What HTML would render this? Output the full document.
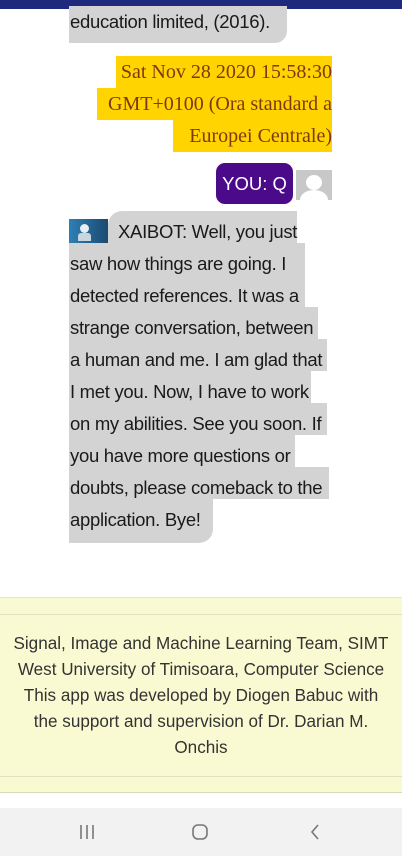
<!DOCTYPE html>
<html><head><meta charset="utf-8"><style>
*{margin:0;padding:0;box-sizing:border-box}
body{width:402px;height:856px;position:relative;background:#fff;overflow:hidden;font-family:"Liberation Sans",sans-serif}
.a{position:absolute;white-space:nowrap}
.g{background:#d3d3d3;color:#1a1a1a;font-size:18.5px;line-height:32px;height:32px;padding-left:1px;letter-spacing:-0.3px}
.b{line-height:42px;overflow:visible}
.y{background:#ffd400;color:#7a3a10;font-family:"Liberation Serif",serif;font-size:20px;line-height:32px;height:32px;text-align:right;padding-right:0}
.f{color:#333;font-size:17.1px;line-height:26px;text-align:center;width:402px;left:0}
</style></head><body>
<div class="a" style="left:0;top:0;width:402px;height:9px;background:#1f2a7e"></div>
<div class="a g" style="left:69px;top:6px;width:218px;height:37px;line-height:32px;border-bottom-right-radius:12px">education limited, (2016).</div>
<div class="a y" style="left:116px;top:56px;width:216px">Sat Nov 28 2020 15:58:30</div>
<div class="a y" style="left:97px;top:88px;width:235px">GMT+0100 (Ora standard a</div>
<div class="a y" style="left:173px;top:120px;width:159px">Europei Centrale)</div>
<div class="a" style="left:216px;top:163px;width:77px;height:41px;background:#4b0a8a;border-radius:9px;color:#fff;font-size:18.5px;line-height:41px;text-align:center">YOU: Q</div>
<div class="a" style="left:296px;top:170px;width:36px;height:30px;background:#c8c8c8;overflow:hidden">
<div style="position:absolute;left:10px;top:5px;width:16px;height:15px;border-radius:50%;background:#fff"></div>
<div style="position:absolute;left:4px;top:20px;width:28px;height:20px;border-radius:50%;background:#fff"></div></div>
<div class="a g b" style="left:108px;top:211px;width:189px;border-top-left-radius:14px;padding-left:10px">XAIBOT: Well, you just</div>
<div class="a" style="left:69px;top:219px;width:39px;height:24px;background:linear-gradient(90deg,#2f7fb5,#1a4a70)">
<div style="position:absolute;left:11px;top:5px;width:9px;height:9px;border-radius:50%;background:#e8eef2"></div>
<div style="position:absolute;left:9px;top:14px;width:13px;height:8px;background:#c8d6e0;border-radius:3px 3px 0 0"></div></div>
<div class="a g b" style="left:69px;top:243px;width:236px">saw how things are going. I</div>
<div class="a g b" style="left:69px;top:275px;width:236px">detected references. It was a</div>
<div class="a g b" style="left:69px;top:307px;width:249px">strange conversation, between</div>
<div class="a g b" style="left:69px;top:339px;width:258px">a human and me. I am glad that</div>
<div class="a g b" style="left:69px;top:371px;width:242px">I met you. Now, I have to work</div>
<div class="a g b" style="left:69px;top:403px;width:258px">on my abilities. See you soon. If</div>
<div class="a g b" style="left:69px;top:435px;width:226px">you have more questions or</div>
<div class="a g b" style="left:69px;top:467px;width:260px">doubts, please comeback to the</div>
<div class="a g b" style="left:69px;top:499px;width:144px;height:44px;border-bottom-right-radius:14px">application. Bye!</div>
<div class="a" style="left:0;top:597px;width:402px;height:196px;background:#fafad2;border-top:1px solid #e6e6c0;border-bottom:1px solid #d8d8b8"></div>
<div class="a" style="left:0;top:614px;width:402px;height:1px;background:#e2e2c0"></div>
<div class="a" style="left:0;top:776px;width:402px;height:1px;background:#e2e2c0"></div>
<div class="a f" style="top:631px">Signal, Image and Machine Learning Team, SIMT</div>
<div class="a f" style="top:657px">West University of Timisoara, Computer Science</div>
<div class="a f" style="top:683px">This app was developed by Diogen Babuc with</div>
<div class="a f" style="top:709px">the support and supervision of Dr. Darian M.</div>
<div class="a f" style="top:735px">Onchis</div>
<div class="a" style="left:0;top:808px;width:402px;height:48px;background:#f2f2f2"></div>
<svg class="a" style="left:0;top:808px" width="402" height="48">
<g stroke="#777" stroke-width="1.6" fill="none">
<path d="M81 17v14M87 17v14M93 17v14"/>
<rect x="193" y="17" width="14" height="14" rx="5"/>
<path d="M318 17l-6 7 6 7"/>
</g></svg>
</body></html>
